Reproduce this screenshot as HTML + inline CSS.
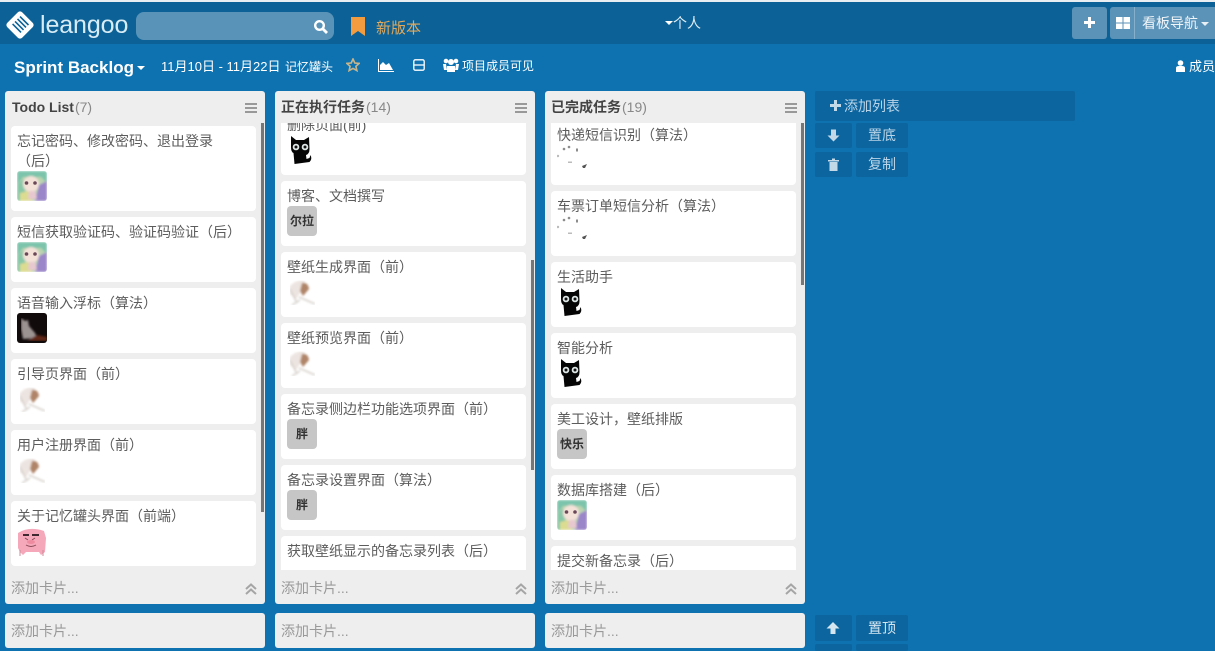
<!DOCTYPE html>
<html><head><meta charset="utf-8">
<style>
*{box-sizing:border-box}
html,body{margin:0;padding:0;width:1215px;height:651px;overflow:hidden;background:#0e72b0;font-family:"Liberation Sans","Noto Sans CJK SC",sans-serif;color:#555}
.a{position:absolute}
.w{color:#fff;white-space:nowrap}
.col{position:absolute;top:91px;width:260px;height:513px;background:#eeeeee;border-radius:3px;overflow:hidden}
.ttl{position:absolute;left:7px;top:8px;font-size:14px;font-weight:bold;color:#444;white-space:nowrap;line-height:17px}
.ttl span{font-weight:normal;color:#888;margin-left:1px}
.ham{position:absolute;left:240px;top:12px;width:12px;height:10px;border-top:2px solid #999;border-bottom:2px solid #999}
.ham:after{content:"";position:absolute;left:0;right:0;top:2px;height:2px;background:#999}
.list{position:absolute;left:0;top:32px;width:260px;height:447px;overflow:hidden}
.card{position:absolute;left:6px;width:245px;height:65px;background:#fff;border-radius:4px;font-size:14px;line-height:20px;color:#5c5c5c;padding:5px 6px 0}
.av{position:absolute;left:6px;width:30px;height:30px;border-radius:3px;overflow:hidden}
.tag{position:absolute;left:6px;width:30px;height:30px;border-radius:4px;background:#c6c6c6;color:#333;font-size:12px;font-weight:bold;text-align:center;line-height:30px}
.sb{position:absolute;width:3px;background:#777}
.add{position:absolute;left:6px;top:488px;font-size:14px;line-height:18px;color:#999;white-space:nowrap}
.chev{position:absolute;left:240px;top:492px}
.bot{position:absolute;top:613px;width:260px;height:35px;background:#eeeeee;border-radius:3px;font-size:14px;color:#999;padding:9px 6px 0;line-height:18px}
.btn{position:absolute;background:#0c659e;border-radius:2px;color:#b9d4e8;font-size:14px;text-align:center}
</style></head><body>
<svg width="0" height="0" style="position:absolute"><defs>
<filter id="bl" x="0" y="0" width="1" height="1"><feGaussianBlur stdDeviation="1"/></filter>
<symbol id="anime" viewBox="0 0 30 30"><g filter="url(#bl)"><rect width="30" height="30" fill="#bcd4b0"/><path d="M0 0H30V12L24 6H6L0 14Z" fill="#7cc4ac"/><path d="M0 14L6 8 8 20 4 30H0Z" fill="#88c8a8"/><path d="M22 14L30 10V30H18Z" fill="#9a86c8"/><path d="M3 22L12 20 15 30H3Z" fill="#dcdc90"/><ellipse cx="14" cy="13" rx="8" ry="8" fill="#f4e2d8"/><path d="M12 20h6l2 8h-9Z" fill="#e8c8d0"/></g><circle cx="9.500" cy="12" r="1.800" fill="#6a4858"/><circle cx="18" cy="12" r="1.800" fill="#6a4858"/></symbol>
<symbol id="cat" viewBox="0 0 30 30"><path d="M4 1l5 4h8l5-3 .5 12q0 5-3.500 6l.5 4 3-1 1-3q2 4-1 7l-15 2-1-11Q4 17 4 12Z" fill="#050505"/><circle cx="9" cy="12" r="3.300" fill="#dfe6e6"/><circle cx="18" cy="12" r="3.300" fill="#dfe6e6"/><circle cx="9" cy="12" r="1.500" fill="#111"/><circle cx="18" cy="12" r="1.500" fill="#111"/></symbol>
<symbol id="sketch" viewBox="0 0 30 30"><g filter="url(#bl)"><path d="M3 9q7-7 15-5l-3 9-6 9-6-5Z" fill="#ece4e0"/><path d="M15 6q6-1 7 6l-6 7-3-5Z" fill="#b08468"/><path d="M3 12L10 26M12 20L28 27M5 28l8-5" stroke="#d8d2ce" stroke-width="1.600" fill="none"/></g></symbol>
<symbol id="pig" viewBox="0 0 30 30"><path d="M1 7q11-7 26-2l2 7-1 14-4 3-2-3H9l-3 3-3-3L1 22Z" fill="#f5a8ba"/><path d="M3 24v6M26 24v6" stroke="#d08898"/><path d="M6 9h6M15 9h7" stroke="#402830" stroke-width="2"/><path d="M8 12l3 2M18 12l-3 2M9 19q5 3 10 0" stroke="#8a4a58" fill="none"/><ellipse cx="14" cy="16" rx="4" ry="2" fill="#ee8ba0"/></symbol>
<symbol id="cow" viewBox="0 0 30 30"><rect width="30" height="30" fill="#120b0b"/><g filter="url(#bl)"><path d="M4 5l4 3 3-1 1 6 6 7 2 5-14 1-2-10Z" fill="#9b9292"/><path d="M10 28h20v-4l-10-2Z" fill="#602512"/></g></symbol>
<symbol id="dots" viewBox="0 0 30 30"><g fill="#8c8c8c"><circle cx="7" cy="4" r="1.300"/><circle cx="12" cy="2" r="1.300"/><rect x="19" y="3.500" width="2" height="3"/><circle cx="1" cy="11" r="1.200" fill="#bbb"/></g><rect x="11" y="16.500" width="4" height="1.500" fill="#bbb"/><path d="M25 21l5-2-2 4-2 0Z" fill="#555"/></symbol>
<symbol id="chev" viewBox="0 0 12 12"><path d="M1 6L6 1.500 11 6M1 11L6 6.500 11 11" stroke="#a5a5a5" stroke-width="2" fill="none"/></symbol>
</defs></svg>

<!-- top bar -->
<div class="a" style="left:0;top:0;width:1215px;height:2px;background:#e8eef2"></div>
<div class="a" style="left:0;top:2px;width:1215px;height:42px;background:#0c6296"></div>
<svg class="a" style="left:5px;top:10px" width="30" height="30" viewBox="0 0 30 30"><g transform="rotate(45 15 15)"><rect x="4.500" y="4.500" width="21" height="21" rx="3" fill="#fff"/><path d="M9 9v12M12.500 9v12M16 9v12M19.500 9v12" stroke="#0c6296" stroke-width="1.600" transform="rotate(90 15 15)"/></g></svg>
<div class="a" style="left:40px;top:9px;font-size:25px;line-height:32px;color:#d8ecf6;white-space:nowrap;letter-spacing:-.1px">leangoo</div>
<div class="a" style="left:136px;top:12px;width:198px;height:28px;background:#5a93b8;border-radius:8px"></div>
<svg class="a" style="left:313px;top:19px" width="15" height="15" viewBox="0 0 15 15"><circle cx="6.500" cy="6.500" r="4.300" fill="none" stroke="#fff" stroke-width="2.400"/><path d="M10 10l4 4" stroke="#fff" stroke-width="2.800"/></svg>
<svg class="a" style="left:350px;top:17px" width="16" height="20" viewBox="0 0 16 20"><path d="M1 0h14v19l-7-5-7 5Z" fill="#f39c3f"/></svg>
<div class="a" style="left:376px;top:20px;font-size:15px;line-height:18px;color:#e3a95c;white-space:nowrap">新版本</div>
<div class="a" style="left:665px;top:21px;width:0;height:0;border:4px solid transparent;border-top-color:#fff;border-bottom:0"></div>
<div class="a w" style="left:673px;top:14px;font-size:14px;line-height:18px;color:#e0edf5">个人</div>
<div class="a" style="left:1072px;top:7px;width:35px;height:32px;background:#5b92b7;border-radius:3px"></div>
<svg class="a" style="left:1083px;top:16px" width="13" height="13" viewBox="0 0 13 13"><path d="M6.500 1v11M1 6.500h11" stroke="#fff" stroke-width="3"/></svg>
<div class="a" style="left:1110px;top:7px;width:105px;height:32px;background:#5b92b7;border-radius:3px 0 0 3px"></div>
<div class="a" style="left:1134px;top:7px;width:1px;height:32px;background:#85afca"></div>
<svg class="a" style="left:1116px;top:17px" width="14" height="12" viewBox="0 0 14 12"><path d="M0 0h6.500v5.500H0ZM7.500 0H14v5.500H7.500ZM0 6.500h6.500V12H0ZM7.500 6.500H14V12H7.500Z" fill="#fff"/></svg>
<div class="a w" style="left:1142px;top:14px;font-size:14px;line-height:18px;color:#f0f5f9">看板导航</div>
<div class="a" style="left:1201px;top:22px;width:0;height:0;border:4px solid transparent;border-top-color:#e8f0f6;border-bottom:0"></div>

<!-- sub bar -->
<div class="a w" style="left:14px;top:58px;font-size:17px;font-weight:bold;line-height:19px">Sprint Backlog</div>
<div class="a" style="left:137px;top:66px;width:0;height:0;border:4px solid transparent;border-top-color:#fff;border-bottom:0"></div>
<div class="a w" style="left:161px;top:59px;font-size:13px;line-height:16px">11月10日 - 11月22日</div>
<div class="a w" style="left:285px;top:59px;font-size:12px;line-height:17px">记忆罐头</div>
<svg class="a" style="left:346px;top:58px" width="14" height="14" viewBox="0 0 14 14"><path d="M7 1l1.800 4 4.400.4-3.300 2.900 1 4.300L7 10.400 3.100 12.600l1-4.300L.8 5.400 5.200 5Z" fill="none" stroke="#c9b58a" stroke-width="1.600"/></svg>
<svg class="a" style="left:378px;top:59px" width="16" height="13" viewBox="0 0 16 13"><path d="M.5 0v12.500H16" stroke="#fff" fill="none"/><path d="M2 11V6l3-3 3 3 3-2 4 7Z" fill="#fff"/></svg>
<svg class="a" style="left:413px;top:59px" width="12" height="12" viewBox="0 0 12 12"><rect x=".8" y=".8" width="10.400" height="10.400" rx="1.500" fill="none" stroke="#fff" stroke-width="1.300"/><path d="M1 6h10" stroke="#fff" stroke-width="1.300"/></svg>
<svg class="a" style="left:443px;top:58px" width="16" height="15" viewBox="0 0 16 15"><circle cx="3" cy="3" r="2.300" fill="#fff"/><circle cx="13" cy="3" r="2.300" fill="#fff"/><circle cx="8" cy="4" r="3" fill="#fff"/><path d="M0 6h3l1 6H1ZM16 6h-3l-1 6h3Z" fill="#fff"/><path d="M4 8h8v6H4Z" fill="#fff"/></svg>
<div class="a w" style="left:462px;top:58px;font-size:12px;line-height:17px">项目成员可见</div>
<svg class="a" style="left:1175px;top:60px" width="11" height="12" viewBox="0 0 11 12"><circle cx="5.500" cy="3" r="2.800" fill="#fff"/><path d="M1 12V8q0-2 3-2h3q3 0 3 2v4Z" fill="#fff"/></svg>
<div class="a w" style="left:1189px;top:58px;font-size:13px;line-height:17px">成员</div>

<!-- col 1 -->
<div class="col" style="left:5px">
<div class="ttl">Todo List<span>(7)</span></div><div class="ham"></div>
<div class="list">
<div class="card" style="top:3px;height:85px;padding-top:5px">忘记密码、修改密码、退出登录<br>（后）<svg class="av" style="top:45px"><use href="#anime" width="30" height="30"/></svg></div>
<div class="card" style="top:94px">短信获取验证码、验证码验证（后）<svg class="av" style="top:25px"><use href="#anime" width="30" height="30"/></svg></div>
<div class="card" style="top:165px">语音输入浮标（算法）<svg class="av" style="top:25px"><use href="#cow" width="30" height="30"/></svg></div>
<div class="card" style="top:236px">引导页界面（前）<svg class="av" style="top:25px"><use href="#sketch" width="30" height="30"/></svg></div>
<div class="card" style="top:307px">用户注册界面（前）<svg class="av" style="top:25px"><use href="#sketch" width="30" height="30"/></svg></div>
<div class="card" style="top:378px">关于记忆罐头界面（前端）<svg class="av" style="top:25px"><use href="#pig" width="30" height="30"/></svg></div>
</div>
<div class="sb" style="left:256px;top:32px;height:389px"></div>
<div class="add">添加卡片...</div><svg class="chev" width="12" height="12"><use href="#chev" width="12" height="12"/></svg>
</div>

<!-- col 2 -->
<div class="col" style="left:275px">
<div class="ttl" style="left:6px">正在执行任务<span>(14)</span></div><div class="ham"></div>
<div class="list">
<div class="card" style="top:-13px">删除页面(前)<svg class="av" style="top:25px"><use href="#cat" width="30" height="30"/></svg></div>
<div class="card" style="top:58px">博客、文档撰写<div class="tag" style="top:25px">尔拉</div></div>
<div class="card" style="top:129px">壁纸生成界面（前）<svg class="av" style="top:25px"><use href="#sketch" width="30" height="30"/></svg></div>
<div class="card" style="top:200px">壁纸预览界面（前）<svg class="av" style="top:25px"><use href="#sketch" width="30" height="30"/></svg></div>
<div class="card" style="top:271px">备忘录侧边栏功能选项界面（前）<div class="tag" style="top:25px">胖</div></div>
<div class="card" style="top:342px">备忘录设置界面（算法）<div class="tag" style="top:25px">胖</div></div>
<div class="card" style="top:413px">获取壁纸显示的备忘录列表（后）</div>
</div>
<div class="sb" style="left:256px;top:169px;height:210px"></div>
<div class="add">添加卡片...</div><svg class="chev" width="12" height="12"><use href="#chev" width="12" height="12"/></svg>
</div>

<!-- col 3 -->
<div class="col" style="left:545px">
<div class="ttl" style="left:6px">已完成任务<span>(19)</span></div><div class="ham"></div>
<div class="list">
<div class="card" style="top:-3px">快递短信识别（算法）<svg class="av" style="top:25px"><use href="#dots" width="30" height="30"/></svg></div>
<div class="card" style="top:68px">车票订单短信分析（算法）<svg class="av" style="top:25px"><use href="#dots" width="30" height="30"/></svg></div>
<div class="card" style="top:139px">生活助手<svg class="av" style="top:25px"><use href="#cat" width="30" height="30"/></svg></div>
<div class="card" style="top:210px">智能分析<svg class="av" style="top:25px"><use href="#cat" width="30" height="30"/></svg></div>
<div class="card" style="top:281px">美工设计，壁纸排版<div class="tag" style="top:25px">快乐</div></div>
<div class="card" style="top:352px">数据库搭建（后）<svg class="av" style="top:25px"><use href="#anime" width="30" height="30"/></svg></div>
<div class="card" style="top:423px">提交新备忘录（后）</div>
</div>
<div class="sb" style="left:256px;top:32px;height:162px"></div>
<div class="add">添加卡片...</div><svg class="chev" width="12" height="12"><use href="#chev" width="12" height="12"/></svg>
</div>

<div class="bot" style="left:5px">添加卡片...</div>
<div class="bot" style="left:275px">添加卡片...</div>
<div class="bot" style="left:545px">添加卡片...</div>

<!-- right actions -->
<div class="a" style="left:815px;top:91px;width:260px;height:30px;background:#0c659e;border-radius:2px"></div>
<svg class="a" style="left:830px;top:100px" width="11" height="11" viewBox="0 0 11 11"><path d="M5.500 0v11M0 5.500h11" stroke="#c3d9e8" stroke-width="3"/></svg>
<div class="a" style="left:844px;top:97px;font-size:14px;line-height:18px;color:#b9d4e8;white-space:nowrap">添加列表</div>
<div class="btn" style="left:815px;top:123px;width:37px;height:25px"></div>
<svg class="a" style="left:827px;top:129px" width="13" height="13" viewBox="0 0 13 13"><path d="M6.500 12.500L.5 6.500h3.500V.5h5v6H12.500Z" fill="#c3d9e8"/></svg>
<div class="btn" style="left:856px;top:123px;width:52px;height:25px;line-height:25px">置底</div>
<div class="btn" style="left:815px;top:152px;width:37px;height:25px"></div>
<svg class="a" style="left:828px;top:158px" width="11" height="13" viewBox="0 0 11 13"><path d="M0 2h11v1.500H0ZM4 .5h3v1.500H4ZM1.500 4h8v9h-8Z" fill="#c3d9e8"/></svg>
<div class="btn" style="left:856px;top:152px;width:52px;height:25px;line-height:25px">复制</div>
<div class="btn" style="left:815px;top:615px;width:37px;height:26px"></div>
<svg class="a" style="left:826px;top:622px" width="14" height="13" viewBox="0 0 14 13"><path d="M7 0l6.500 6.500H9.500V12h-5V6.500H.5Z" fill="#d5e6f1"/></svg>
<div class="btn" style="left:856px;top:615px;width:52px;height:26px;line-height:26px;color:#d5e6f1">置顶</div>
<div class="btn" style="left:815px;top:644px;width:37px;height:7px"></div>
<div class="btn" style="left:856px;top:644px;width:52px;height:7px"></div>
</body></html>
